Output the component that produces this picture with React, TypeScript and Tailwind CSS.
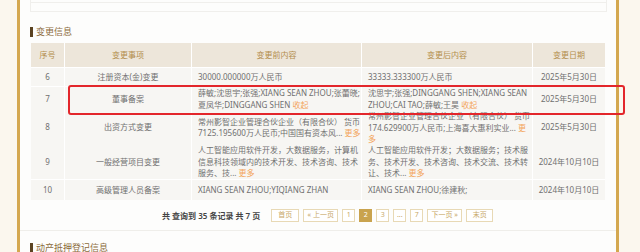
const COLS = "grid grid-cols-[33px_126px_169px_170px_72px] gap-px";

// each line: [plain text, orange link text]
type Line = [string, string?];

type Row = {
  no: string;
  item: string;
  before: Line[];
  after: Line[];
  date: string;
  h: string;
};

const ROWS: Row[] = [
  {
    no: "6",
    item: "注册资本(金)变更",
    before: [["30000.000000万人民币"]],
    after: [["33333.333300万人民币"]],
    date: "2025年5月30日",
    h: "h-[18px]",
  },
  {
    no: "7",
    item: "董事备案",
    before: [["薛敏;沈思宇;张强;XIANG SEAN ZHOU;张蕾晓;"], ["夏凤华;DINGGANG SHEN ", "收起"]],
    after: [["沈思宇;张强;DINGGANG SHEN;XIANG SEAN"], ["ZHOU;CAI TAO;薛敏;王昊 ", "收起"]],
    date: "2025年5月30日",
    h: "h-[22px]",
  },
  {
    no: "8",
    item: "出资方式变更",
    before: [["常州影智企业管理合伙企业（有限合伙） 货币"], ["7125.195600万人民币;中国国有资本风... ", "更多"]],
    after: [["常州影智企业管理合伙企业（有限合伙） 货币"], ["174.629900万人民币;上海喜大惠利实业... ", "更"], ["", "多"]],
    date: "2025年5月30日",
    h: "h-[33px]",
  },
  {
    no: "9",
    item: "一般经营项目变更",
    before: [
      ["人工智能应用软件开发，大数据服务，计算机"],
      ["信息科技领域内的技术开发、技术咨询、技术"],
      ["服务、技... ", "更多"],
    ],
    after: [
      ["人工智能应用软件开发；大数据服务；技术服"],
      ["务、技术开发、技术咨询、技术交流、技术转"],
      ["让、技术... ", "更多"],
    ],
    date: "2024年10月10日",
    h: "h-[35px]",
  },
  {
    no: "10",
    item: "高级管理人员备案",
    before: [["XIANG SEAN ZHOU;YIQIANG ZHAN"]],
    after: [["XIANG SEAN ZHOU;徐建秋;"]],
    date: "2024年10月10日",
    h: "h-[20px]",
  },
];

function Lines({ lines }: { lines: Line[] }) {
  return (
    <div className="px-[6px] leading-[11.5px]">
      {lines.map(([text, link], i) => (
        <div key={i} className="whitespace-nowrap">
          {text}
          {link && <span className="text-[#f3a55c]">{link}</span>}
        </div>
      ))}
    </div>
  );
}

function SectionTitle({ text }: { text: string }) {
  return (
    <div className="ml-[10px] flex items-center gap-[3px] h-[11px]">
      <span className="w-[3px] h-[10px] bg-[#5b4322]" />
      <span className="text-[9px] text-[#8c6c3c]">{text}</span>
    </div>
  );
}

const PAGES = [
  { t: "首页", w: "w-[28px]" },
  { t: "« 上一页", w: "w-[35px]" },
  { t: "1", w: "w-[13px]" },
  { t: "2", w: "w-[13px]", active: true },
  { t: "3", w: "w-[13px]" },
  { t: "...", w: "w-[13px]" },
  { t: "7", w: "w-[13px]" },
  { t: "下一页 »", w: "w-[35px]" },
  { t: "末页", w: "w-[27px]" },
];

export default function App() {
  return (
    <div className="w-[640px] h-[252px] overflow-hidden bg-[#fbf7ee] flex font-['Noto_Sans','Noto_Sans_CJK_SC',sans-serif] text-[8px] text-[#707070]">
      <div className="w-[17px] shrink-0" />
      <div className="w-[602px] shrink-0 border-x-[3px] border-[#d4a850] bg-[#fdfdfc]">
        {/* end of previous block */}
        <div className="ml-[10px] mr-[9px] h-[12px] border-x border-b border-[#f0efec]">
          <div className="h-[3px] border-b border-[#f0efec]" />
        </div>

        <div className="mt-[14px]">
          <SectionTitle text="变更信息" />
        </div>

        <div className="relative ml-[11px] mt-[6px] w-[574px]">
          <div className="flex flex-col gap-px bg-white">
            <div className={`${COLS} h-[24px] text-[#b38d4b]`}>
              {["序号", "变更事项", "变更前内容", "变更后内容", "变更日期"].map((h) => (
                <div key={h} className="bg-[#ede6da] flex items-center justify-center">
                  {h}
                </div>
              ))}
            </div>
            {ROWS.map((r) => (
              <div key={r.no} className={`${COLS} ${r.h}`}>
                <div className="bg-[#f7f6f3] flex items-center justify-center">{r.no}</div>
                <div className="bg-[#f7f6f3] flex items-center justify-center">{r.item}</div>
                <div className="bg-[#f7f6f3] flex items-center">
                  <Lines lines={r.before} />
                </div>
                <div className="bg-[#f7f6f3] flex items-center">
                  <Lines lines={r.after} />
                </div>
                <div className="bg-[#f7f6f3] flex items-center justify-center">{r.date}</div>
              </div>
            ))}
          </div>
          {/* highlight */}
          <div className="absolute left-[37px] top-[42px] w-[557px] h-[30px] border-2 border-[#e3262b] rounded-[3px] z-10" />
        </div>

        <div className="mt-[9px] mb-[8px] flex items-center pl-[142px] h-[13px]">
          <span className="font-semibold text-[#444] mr-[11px]">共 查询到 35 条记录 共 7 页</span>
          <div className="flex gap-[4px]">
            {PAGES.map((p) => (
              <div
                key={p.t}
                className={`${p.w} h-[13px] flex items-center justify-center border text-[7px] ${
                  p.active ? "bg-[#c9a34e] border-[#c9a34e] text-white" : "bg-white border-[#e8d9b5] text-[#c8a868]"
                }`}
              >
                {p.t}
              </div>
            ))}
          </div>
        </div>
        <div className="border-b border-[#efeeea]" />

        <div className="mt-[11px]">
          <SectionTitle text="动产抵押登记信息" />
        </div>
      </div>
    </div>
  );
}
